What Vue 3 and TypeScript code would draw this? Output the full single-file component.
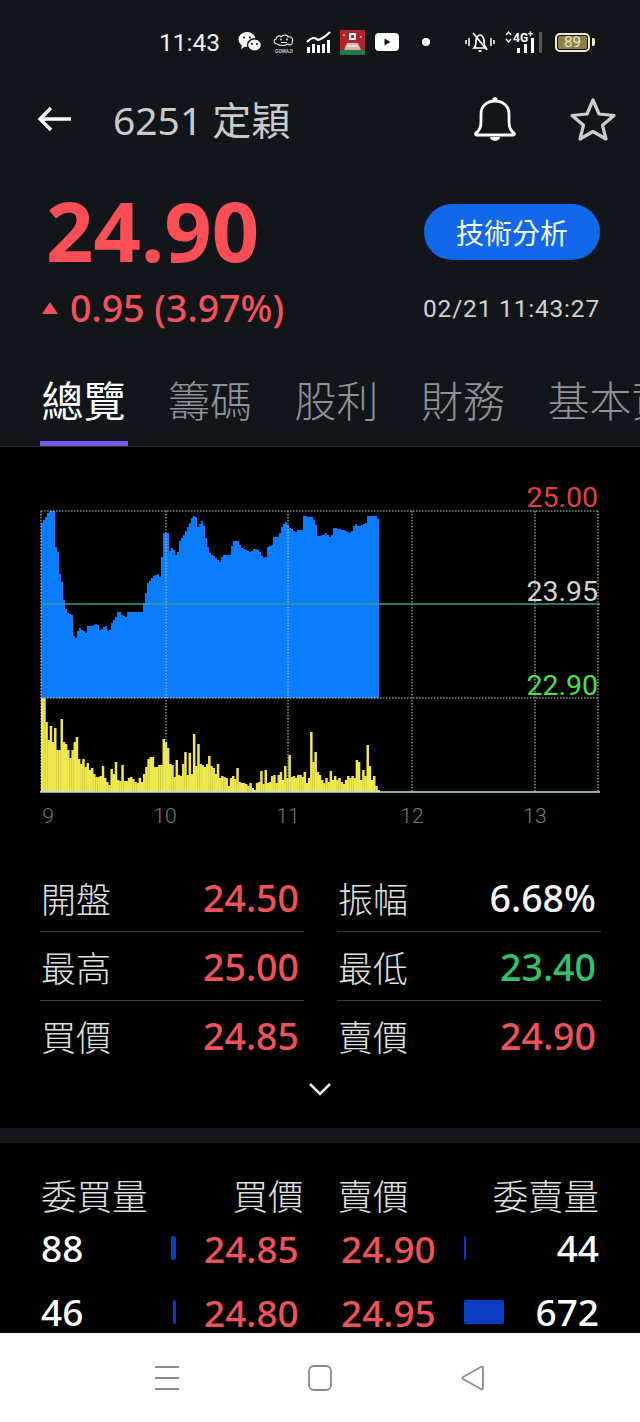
<template>
  <div class="phone">
    <div class="status-bar">
      <span class="clock">11:43</span>
      <svg class="ic-wechat" width="24" height="22" viewBox="0 0 24 22">
        <ellipse cx="9" cy="8.5" rx="8.5" ry="7.5" fill="#fff" />
        <path d="M4 14l-1 4 4-2.5z" fill="#fff" />
        <ellipse cx="16.5" cy="14" rx="7" ry="6.2" fill="#fff" stroke="#12161a" stroke-width="1.4" />
        <circle cx="14" cy="13" r="1" fill="#12161a" />
        <circle cx="19" cy="13" r="1" fill="#12161a" />
        <circle cx="6" cy="6.5" r="1.1" fill="#12161a" />
        <circle cx="12" cy="6.5" r="1.1" fill="#12161a" />
      </svg>
      <svg class="ic-gomaji" width="24" height="24" viewBox="0 0 24 24">
        <path d="M5 14c-3 0-4-4-1-5 0-3 4-4 5-2 2-3 7-2 7 0 3-1 6 2 4 5 1 2-2 4-4 2-3 2-8 2-11 0z" fill="none" stroke="#e4e4e4" stroke-width="1.1" />
        <circle cx="9" cy="9.5" r="0.9" fill="#e4e4e4" />
        <circle cx="15" cy="9.5" r="0.9" fill="#e4e4e4" />
        <path d="M9 12.5h6" stroke="#e4e4e4" stroke-width="1" />
        <text x="12" y="22.5" text-anchor="middle" class="gomaji-label">GOMAJI</text>
      </svg>
      <svg class="ic-market" width="25" height="22" viewBox="0 0 25 22">
        <path d="M1 11c5-5 8-5 11-2 4-1 8-4 12-8" fill="none" stroke="#fff" stroke-width="2" />
        <path d="M1 22v-6h3v6zM6 22v-9h3v9zM11 22v-8h3v8zM16 22v-9h3v9zM21 22v-13h3v13z" fill="#fff" />
      </svg>
      <svg class="ic-game" width="25" height="25" viewBox="0 0 25 25">
        <rect width="25" height="25" fill="#b0252c" />
        <rect y="20" width="25" height="5" fill="#1f7a45" />
        <rect x="9" y="3" width="7" height="7" rx="1" fill="#fff" />
        <rect x="11" y="5" width="3" height="3" fill="#b0252c" />
        <path d="M4 20l3-7h11l3 7z" fill="#d8b4a8" />
        <path d="M7 16h11" stroke="#fff" stroke-width="1" />
        <circle cx="4" cy="5" r="0.8" fill="#fff" />
        <circle cx="21" cy="7" r="0.8" fill="#fff" />
      </svg>
      <svg class="ic-youtube" width="24" height="18" viewBox="0 0 24 18">
        <rect width="24" height="18" rx="4" fill="#fff" />
        <path d="M9.5 5.5l6 3.5-6 3.5z" fill="#12161a" />
      </svg>
      <span class="status-dot"></span>
      <svg class="ic-mute" width="30" height="24" viewBox="0 0 30 24">
        <path d="M9 18c2-2 2-4 2-7 0-3 2-6 4-6s4 3 4 6c0 3 0 5 2 7z" fill="none" stroke="#fff" stroke-width="1.7" />
        <path d="M8 3l14 17" stroke="#fff" stroke-width="1.7" />
        <path d="M13.500 21h3" stroke="#fff" stroke-width="1.7" />
        <path d="M1 10v4M4 8v8M26 8v8M29 10v4" stroke="#fff" stroke-width="1.5" />
      </svg>
      <svg class="ic-signal" width="38" height="24" viewBox="0 0 38 24">
        <path d="M1 5l2.500-3 2.500 3M1 9l2.500 3 2.500-3" fill="none" stroke="#fff" stroke-width="1.300" />
        <text x="8" y="12" class="net-label">4G</text>
        <text x="23" y="7" class="net-plus">+</text>
        <rect x="12" y="18" width="3" height="5" fill="#fff" />
        <rect x="19" y="14" width="3" height="9" fill="#fff" />
        <rect x="26" y="8" width="3" height="15" fill="#fff" />
        <rect x="34" y="2" width="3" height="21" fill="#55585b" />
      </svg>
      <span class="battery"><span class="battery-level">89</span></span>
      <span class="battery-cap"></span>
    </div>

    <header class="title-bar">
      <svg class="back" width="36" height="28" viewBox="0 0 36 28">
        <path d="M34 14H3M14 3L3 14l11 11" fill="none" stroke="#fff" stroke-width="3.400" />
      </svg>
      <h1 class="title">6251 定穎</h1>
      <svg class="bell" width="42" height="46" viewBox="0 0 42 46">
        <path d="M2 37c3-2 5-5 5-11v-8c0-8 6-13 14-13s14 5 14 13v8c0 6 2 9 5 11 1 1 0 2-1 2H3c-1 0-2-1-1-2z" fill="none" stroke="#fff" stroke-width="2.800" />
        <circle cx="21" cy="3.500" r="2.500" fill="#fff" />
        <path d="M16 41h10c0 5-10 5-10 0z" fill="#fff" />
      </svg>
      <svg class="star" width="46" height="44" viewBox="0 0 46 44">
        <path d="M23 3l6 14 15 1.500-11.500 9.800L36 42l-13-7.500L10 42l3.500-13.700L2 18.500 17 17z" fill="none" stroke="#ccced0" stroke-width="3.200" stroke-linejoin="round" />
      </svg>
    </header>

    <section class="quote-head">
      <div class="price-block">
        <div class="last-price">24.90</div>
        <div class="change">
          <span class="up-arrow"></span>
          <span>0.95 (3.97%)</span>
        </div>
      </div>
      <div class="side-block">
        <button class="ta-btn">技術分析</button>
        <div class="quote-time">02/21 11:43:27</div>
      </div>
    </section>

    <nav class="tabs">
      <span v-for="(t, i) in tabs" :key="t" :class="['tab', { active: i === 0 }]">{{ t }}</span>
    </nav>

    <main class="content">
      <section class="overview">
        <svg class="chart" width="640" height="390" viewBox="0 447 640 390">
          <path :d="pricePath" fill="#0a7cff" />
          <rect
            v-for="b in volBars"
            :key="b.x"
            :x="b.x"
            :y="792 - b.h"
            width="2.500"
            :height="b.h"
            fill="#efe84e"
          />
          <g class="grid-lines">
            <line v-for="x in gridX" :key="x" :x1="x" :x2="x" y1="511" y2="792" />
            <line x1="41" x2="598" y1="511" y2="511" />
            <line x1="41" x2="598" y1="698" y2="698" />
          </g>
          <line x1="41" x2="600" y1="604" y2="604" stroke="#3f9a98" stroke-width="1.300" />
          <line x1="40" x2="600" y1="792" y2="792" stroke="#b9e6e0" stroke-width="1.600" />
          <text x="598" y="507" text-anchor="end" class="scale" fill="#e04040">25.00</text>
          <text x="598" y="601" text-anchor="end" class="scale" fill="#d4d4d4">23.95</text>
          <text x="598" y="695" text-anchor="end" class="scale" fill="#4be04b">22.90</text>
          <text v-for="a in axis" :key="a.label" :x="a.x" y="823" text-anchor="middle" class="axis">{{ a.label }}</text>
        </svg>

        <div class="stats">
          <div v-for="s in stats" :key="s.label" class="stat">
            <span class="stat-label">{{ s.label }}</span>
            <span :class="['stat-value', s.tone]">{{ s.value }}</span>
          </div>
        </div>
        <svg class="chevron" width="24" height="14" viewBox="0 0 24 14">
          <path d="M2 2l10 10L22 2" fill="none" stroke="#e6e6e6" stroke-width="2.600" />
        </svg>
      </section>

      <div class="divider"></div>

      <section class="book">
        <div class="book-head">
          <span>委買量</span>
          <span>買價</span>
          <span>賣價</span>
          <span class="head-end">委賣量</span>
        </div>
        <div v-for="r in book" :key="r.bid" class="book-row">
          <div class="side">
            <span class="qty">{{ r.bidQty }}</span>
            <i class="depth" :style="{ width: r.bidBar + 'px' }"></i>
          </div>
          <span class="book-price bid">{{ r.bid }}</span>
          <span class="book-price ask">{{ r.ask }}</span>
          <div class="side ask-side">
            <i class="depth" :style="{ width: r.askBar + 'px' }"></i>
            <span class="qty">{{ r.askQty }}</span>
          </div>
        </div>
      </section>
    </main>

    <footer class="nav-bar">
      <svg width="26" height="26" viewBox="0 0 26 26">
        <path d="M1 2h24M1 13h24M1 24h24" stroke="#8b8b8b" stroke-width="1.800" />
      </svg>
      <svg width="24" height="26" viewBox="0 0 24 26">
        <rect x="1" y="1" width="22" height="24" rx="5" fill="none" stroke="#8b8b8b" stroke-width="1.800" />
      </svg>
      <svg width="26" height="26" viewBox="0 0 26 26">
        <path d="M23 2v21c0 1-1 2-2 1L3 14c-1-.6-1-1.400 0-2L21 2c1-.6 2 0 2 0z" fill="none" stroke="#8b8b8b" stroke-width="1.800" />
      </svg>
    </footer>
  </div>
</template>

<script setup lang="ts">
const tabs = ['總覽', '籌碼', '股利', '財務', '基本資料']

const gridX = [41, 166, 288, 412, 535, 598]
const axis = [
  { label: '9', x: 48 },
  { label: '10', x: 165 },
  { label: '11', x: 288 },
  { label: '12', x: 412 },
  { label: '13', x: 535 }
]

// 價格走勢,座標為頁面像素
const priceLine: [number, number][] = [
  [41, 523], [45, 517], [48, 511], [53, 511], [54, 545], [57, 552], [58, 570], [61, 582],
  [63, 600], [66, 613], [72, 615], [73, 636], [75, 638], [78, 627], [85, 633], [87, 626],
  [92, 626], [96, 623], [99, 630], [105, 626], [108, 634], [111, 623], [115, 617], [118, 609],
  [120, 615], [125, 617], [127, 612], [141, 612], [145, 593], [147, 583], [152, 577], [158, 573],
  [160, 580], [162, 533], [167, 533], [168, 552], [172, 547], [176, 558], [179, 541], [184, 533],
  [188, 525], [192, 515], [196, 518], [197, 527], [202, 520], [205, 538], [208, 552], [217, 560],
  [218, 564], [222, 555], [229, 555], [232, 541], [237, 541], [241, 548], [250, 552], [253, 549],
  [258, 550], [262, 558], [265, 557], [267, 547], [272, 545], [273, 537], [278, 537], [280, 528],
  [285, 522], [289, 528], [295, 532], [297, 530], [301, 530], [302, 516], [312, 517], [316, 527],
  [317, 536], [323, 535], [324, 532], [330, 538], [333, 528], [343, 530], [350, 533], [354, 523],
  [358, 527], [365, 523], [367, 516], [375, 516], [379, 522]
]

function lineAt(x: number) {
  for (let i = 1; i < priceLine.length; i++) {
    const [x0, y0] = priceLine[i - 1]
    const [x1, y1] = priceLine[i]
    if (x <= x1) return y0 + ((y1 - y0) * (x - x0)) / (x1 - x0 || 1)
  }
  return priceLine[priceLine.length - 1][1]
}

// 走勢畫成階梯狀
let stepped = 'M41 698'
for (let x = 41; x < 379; x += 2) {
  stepped += `V${Math.round(lineAt(x))}H${Math.min(x + 2, 379)}`
}
const pricePath = stepped + 'V698Z'

const volumes = [
  94, 94, 70, 52, 66, 50, 64, 42, 42, 73, 50, 48, 42, 34, 42, 50, 55, 33, 28, 33, 25, 29, 22, 24, 18, 15, 15, 16,
  26, 14, 10, 7, 23, 18, 30, 12, 11, 27, 11, 11, 14, 15, 13, 10, 9, 14, 10, 18, 25, 33, 35, 35, 25, 25, 27, 27,
  53, 50, 44, 28, 27, 15, 32, 17, 16, 28, 40, 17, 39, 18, 58, 26, 48, 28, 27, 25, 28, 36, 26, 24, 18, 28, 14, 16,
  15, 14, 6, 14, 16, 13, 24, 10, 9, 9, 8, 6, 9, 4, 2, 9, 10, 21, 8, 22, 9, 10, 16, 17, 9, 17, 20, 12, 26, 14, 37,
  15, 16, 14, 17, 17, 15, 20, 9, 14, 60, 30, 40, 20, 17, 12, 9, 14, 10, 21, 12, 16, 12, 14, 10, 8, 12, 16, 14, 16,
  14, 32, 30, 12, 22, 16, 47, 26, 12, 16, 6, 2
]
const volBars = volumes.map((h, i) => ({ x: 41 + i * 2.17, h }))

const stats = [
  { label: '開盤', value: '24.50', tone: 'up' },
  { label: '振幅', value: '6.68%', tone: 'flat' },
  { label: '最高', value: '25.00', tone: 'up' },
  { label: '最低', value: '23.40', tone: 'down' },
  { label: '買價', value: '24.85', tone: 'up' },
  { label: '賣價', value: '24.90', tone: 'up' }
]

const book = [
  { bidQty: 88, bidBar: 5, bid: '24.85', ask: '24.90', askBar: 2, askQty: 44 },
  { bidQty: 46, bidBar: 3, bid: '24.80', ask: '24.95', askBar: 40, askQty: 672 }
]
</script>

<style>
body {
  background: #000;
}
</style>

<style scoped>
.phone {
  width: 640px;
  height: 1422px;
  display: flex;
  flex-direction: column;
  overflow: hidden;
  background: #12161a;
  color: #fff;
  font-family: "Noto Sans", "Noto Sans CJK TC", sans-serif;
}

.status-bar {
  height: 72px;
  flex: none;
  display: flex;
  align-items: center;
  padding: 12px 0 0 159px;
  box-sizing: border-box;
}
.clock {
  width: 60px;
  margin-right: 19px;
  font-family: Roboto, sans-serif;
  font-size: 24.500px;
  color: #f2f2f2;
}
.ic-gomaji { margin-left: 10px; }
.ic-market { margin-left: 10px; }
.ic-game { margin-left: 9px; }
.ic-youtube { margin-left: 10px; }
.status-dot {
  width: 8px;
  height: 8px;
  margin-left: 23px;
  border-radius: 50%;
  background: #fff;
}
.ic-mute { margin-left: 35px; }
.ic-signal { margin-left: 10px; }
.gomaji-label {
  font: 700 4.500px "Liberation Sans", sans-serif;
  fill: #cfcfcf;
}
.net-label {
  font: 700 12px Roboto, sans-serif;
  fill: #fff;
}
.net-plus {
  font: 700 9px Roboto, sans-serif;
  fill: #fff;
}
.battery {
  width: 35px;
  height: 19px;
  margin-left: 12px;
  padding: 1px;
  border: 2px solid #f0e9d0;
  border-radius: 5px;
  box-sizing: border-box;
  display: flex;
}
.battery-level {
  flex: 1;
  border-radius: 2px;
  background: #8c8148;
  color: #f2e9c4;
  font: 15px/13px Roboto, sans-serif;
  text-align: center;
}
.battery-cap {
  width: 3px;
  height: 8px;
  margin-left: 2px;
  background: #f0e9d0;
  border-radius: 0 2px 2px 0;
}

.title-bar {
  height: 94px;
  flex: none;
  display: flex;
  align-items: center;
  padding: 0 0 0 37px;
}
.title {
  margin: 0 0 3px 40px;
  width: 361px;
  font-size: 39px;
  font-weight: 400;
  color: #c9cbcd;
  white-space: nowrap;
}
.bell { margin-right: 54px; }

.quote-head {
  height: 199px;
  flex: none;
  display: flex;
  justify-content: space-between;
  padding: 0 40px 0 46px;
  box-sizing: border-box;
}
.price-block {
  padding-top: 11px;
}
.last-price {
  height: 106px;
  font-size: 83px;
  line-height: 106px;
  font-weight: 700;
  color: #fb4e55;
}
.change {
  display: flex;
  align-items: center;
  gap: 12px;
  margin-top: -1px;
  font-size: 37.500px;
  font-weight: 500;
  color: #f25258;
}
.up-arrow {
  width: 0;
  height: 0;
  border-left: 8px solid transparent;
  border-right: 8px solid transparent;
  border-bottom: 12px solid #f25258;
  margin-left: -4px;
}
.side-block {
  display: flex;
  flex-direction: column;
  align-items: flex-end;
  padding-top: 38px;
}
.ta-btn {
  width: 176px;
  height: 56px;
  border: none;
  border-radius: 28px;
  background: #1268ea;
  color: #f2f5fa;
  font-family: inherit;
  font-size: 28px;
}
.quote-time {
  margin-top: 34px;
  font-family: Roboto, sans-serif;
  font-size: 24.500px;
  letter-spacing: 0.8px;
  color: #d0d2d4;
}

.tabs {
  height: 82px;
  flex: none;
  display: flex;
  gap: 42.500px;
  padding-left: 41.500px;
  box-sizing: border-box;
  overflow: hidden;
  border-bottom: 1px solid #2c2f33;
}
.tab {
  position: relative;
  flex: none;
  height: 76px;
  font-family: "Noto Sans CJK TC", sans-serif;
  font-size: 42px;
  line-height: 68px;
  font-weight: 300;
  color: #8f9397;
}
.tab.active {
  color: #fff;
  font-weight: 400;
}
.tab.active::after {
  content: "";
  position: absolute;
  left: -2px;
  right: -2px;
  bottom: -6px;
  height: 6px;
  background: #7a5ce8;
}

.content {
  flex: 1;
  min-height: 0;
  overflow: hidden;
  background: #000;
}
.chart {
  display: block;
}
.grid-lines line {
  stroke: #cfcfcf;
  stroke-width: 1;
  stroke-dasharray: 1.500 1.500;
}
.scale {
  font-family: Roboto, sans-serif;
  font-size: 28.500px;
  font-weight: 400;
}
.axis {
  font-family: Roboto, sans-serif;
  font-size: 21px;
  font-weight: 300;
  fill: #77797c;
}

.overview {
  height: 681px;
  position: relative;
}
.stats {
  margin-top: 26px;
  padding: 0 40px;
  display: grid;
  grid-template-columns: 264px 264px;
  column-gap: 33px;
}
.stat {
  height: 68px;
  display: flex;
  align-items: center;
  justify-content: space-between;
  padding: 0 5px 0 1px;
  border-bottom: 1px solid #3a3c3e;
}
.stat:nth-last-child(-n + 2) {
  border-bottom: none;
}
.stat-label {
  font-family: "Noto Sans CJK TC", sans-serif;
  font-size: 35px;
  font-weight: 300;
  color: #e0e0e0;
}
.stat-value {
  font-size: 37.500px;
  font-weight: 500;
}
.up { color: #f0525a; }
.down { color: #2fc46c; }
.flat { color: #f5f5f5; }
.chevron {
  display: block;
  margin: 13px auto 0;
}

.divider {
  height: 15px;
  background: #14181c;
}
.book {
  padding: 30px 41px 0;
}
.book-head {
  display: grid;
  grid-template-columns: 1fr 70px 70px 1fr;
  column-gap: 35px;
  height: 43px;
  font-family: "Noto Sans CJK TC", sans-serif;
  font-size: 35.500px;
  line-height: 44px;
  font-weight: 300;
  color: #e0e0e0;
  white-space: nowrap;
}
.head-end {
  text-align: right;
}
.book-row {
  display: grid;
  grid-template-columns: 135px 122px 138px 163px;
  height: 64px;
  align-items: center;
}
.side {
  display: flex;
  align-items: center;
  justify-content: space-between;
  height: 26px;
}
.ask-side {
  padding-left: 28px;
}
.qty {
  font-size: 37px;
  font-weight: 500;
  line-height: 26px;
}
.depth {
  display: block;
  height: 24px;
  border-radius: 2px;
  background: #0a3cc0;
}
.book-price {
  font-size: 37px;
  font-weight: 500;
  color: #f0525a;
  white-space: nowrap;
}
.book-price.bid {
  padding-left: 28px;
}
.book-price.ask {
  padding-left: 43px;
}

.nav-bar {
  height: 89px;
  flex: none;
  display: flex;
  align-items: center;
  justify-content: center;
  gap: 128px;
  background: #fff;
}
</style>
